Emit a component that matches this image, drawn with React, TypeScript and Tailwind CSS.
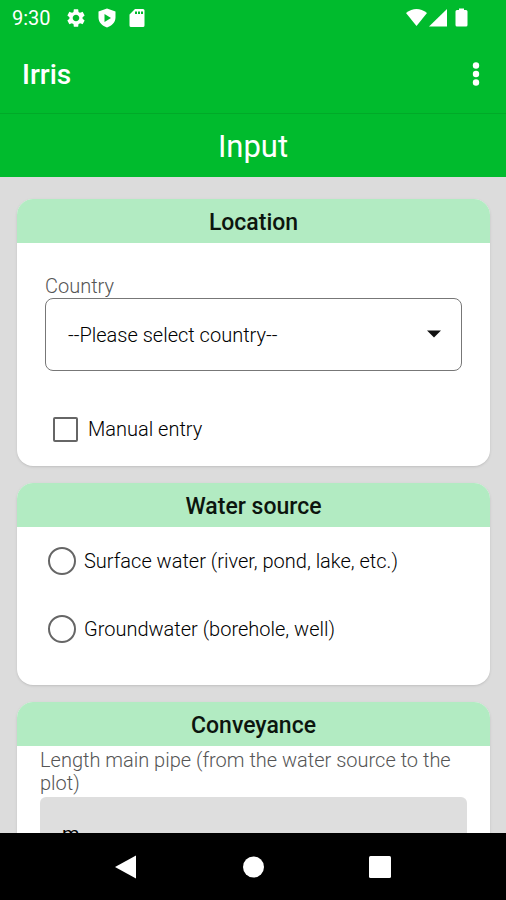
import { useState } from "react";
import type { ReactNode } from "react";
import { MdSettings } from "react-icons/md";

const waterSources = [
  { id: "surface", label: "Surface water (river, pond, lake, etc.)" },
  { id: "ground", label: "Groundwater (borehole, well)" },
];

function StatusBar() {
  return (
    <div className="flex h-9 items-center justify-between pl-3 pr-9">
      <div className="flex items-center">
        <span className="text-xl leading-6">9:30</span>
        <MdSettings className="ml-3.5 w-[22px] h-[22px]" />
        <svg viewBox="0 0 20 20" className="ml-2.5 w-5 h-5" fill="currentColor" aria-hidden="true">
          <path
            fillRule="evenodd"
            d="M10 0.5 L18.5 3.5 V9.5 C18.5 14.5 14.5 18 10 19.5 C5.5 18 1.5 14.5 1.5 9.5 V3.5 Z M7.5 6 V14 L14 10 Z"
          />
        </svg>
        <svg viewBox="0 0 16 20" className="ml-3 w-4 h-5" fill="currentColor" aria-hidden="true">
          <path
            fillRule="evenodd"
            d="M6 1 H14 Q15.5 1 15.5 2.5 V17.5 Q15.5 19 14 19 H2 Q0.5 19 0.5 17.5 V6.5 Z M6 3.5 V6 H8 V3.5 Z M9 3.5 V6 H11 V3.5 Z M12 3.5 V6 H14 V3.5 Z"
          />
        </svg>
      </div>
      <svg viewBox="0 0 64 20" className="w-16 h-5" fill="currentColor" aria-hidden="true">
        <path d="M0 5 Q10.5 -3 21 5 L10.5 18 Z" />
        <path d="M41 1 V18.5 H23 Z" />
        <path d="M53 0.5 H58 V2 H60 Q61.5 2 61.5 3.5 V17 Q61.5 18.5 60 18.5 H51 Q49.5 18.5 49.5 17 V3.5 Q49.5 2 51 2 H53 Z" />
      </svg>
    </div>
  );
}

function Card({ title, children }: { title: string; children: ReactNode }) {
  return (
    <section className="shrink-0 overflow-hidden rounded-2xl bg-white shadow-sm">
      <h2 className="flex h-11 items-center justify-center bg-[#b2ebc2] pt-1 text-[23px] leading-7 font-medium text-[#0c150e]">
        {title}
      </h2>
      {children}
    </section>
  );
}

function NavBar() {
  return (
    <nav className="flex h-[67px] shrink-0 items-center justify-center gap-[103px] bg-black text-white">
      <button type="button" aria-label="Back">
        <svg viewBox="0 0 24 24" className="w-6 h-6" fill="currentColor">
          <path d="M22 0.5 V23.5 L1 12 Z" />
        </svg>
      </button>
      <button type="button" aria-label="Home">
        <svg viewBox="0 0 24 24" className="w-6 h-6" fill="currentColor">
          <circle cx="12.5" cy="12" r="10.5" />
        </svg>
      </button>
      <button type="button" aria-label="Recent apps">
        <svg viewBox="0 0 24 24" className="w-6 h-6" fill="currentColor">
          <rect x="1" y="1" width="22" height="22" rx="1.5" />
        </svg>
      </button>
    </nav>
  );
}

export default function App() {
  const [country, setCountry] = useState("");
  const [manual, setManual] = useState(false);
  const [source, setSource] = useState("");
  const [pipeLength, setPipeLength] = useState("m");

  return (
    <div className="flex h-screen flex-col bg-[#dcdcdc] font-[Roboto,sans-serif] text-black">
      <header className="shrink-0 bg-[#00bb2d] text-white">
        <StatusBar />
        <div className="flex h-[78px] items-center justify-between border-b border-[#00aa28] pl-[22px] pr-4">
          <h1 className="text-[28px] leading-8 font-medium">Irris</h1>
          <button type="button" aria-label="More options">
            <svg viewBox="0 0 28 28" className="w-7 h-7" fill="currentColor">
              <circle cx="14" cy="4.5" r="3.2" />
              <circle cx="14" cy="13" r="3.2" />
              <circle cx="14" cy="21.5" r="3.2" />
            </svg>
          </button>
        </div>
        <p className="flex h-[63px] items-center justify-center pt-0.5 text-[31px] leading-9">Input</p>
      </header>

      <main className="flex min-h-0 flex-1 flex-col gap-[17px] overflow-y-auto pt-[22px] pr-4 pl-[17px] [scrollbar-width:none]">
        <Card title="Location">
          <div className="px-7 pt-8 pb-6">
            <label htmlFor="country" className="block text-xl leading-[23px] font-light text-[#555]">
              Country
            </label>
            <div className="relative">
              <select
                id="country"
                value={country}
                onChange={(e) => setCountry(e.target.value)}
                className="block h-[73px] w-full appearance-none rounded-lg border border-[#777] bg-white px-[22px] text-xl font-light"
              >
                <option value="">--Please select country--</option>
                <option value="ke">Kenya</option>
                <option value="ug">Uganda</option>
              </select>
              <svg
                viewBox="0 0 14 8"
                className="pointer-events-none absolute top-8 right-5 h-2 w-4"
                fill="#111"
                aria-hidden="true"
              >
                <path d="M0 0.5 H14 L7 7.5 Z" />
              </svg>
            </div>
            <label className="mt-[45px] flex items-center gap-2.5 pl-2 text-xl leading-[26px] font-light">
              <input
                type="checkbox"
                checked={manual}
                onChange={(e) => setManual(e.target.checked)}
                className="h-[25px] w-[25px] appearance-none rounded-xs border-2 border-[#666] bg-white checked:bg-[#00bb2d]"
              />
              Manual entry
            </label>
          </div>
        </Card>

        <Card title="Water source">
          <div className="flex flex-col gap-10 px-[31px] pt-5 pb-[42px]">
            {waterSources.map((item) => (
              <label key={item.id} className="flex items-center gap-2 text-xl leading-7 font-light">
                <input
                  type="radio"
                  name="source"
                  value={item.id}
                  checked={source === item.id}
                  onChange={() => setSource(item.id)}
                  className="h-7 w-7 shrink-0 appearance-none rounded-full border-2 border-[#666] bg-white checked:border-8 checked:border-[#00bb2d]"
                />
                {item.label}
              </label>
            ))}
          </div>
        </Card>

        <Card title="Conveyance">
          <div className="px-[23px] pt-[3px] pb-6">
            <label htmlFor="pipe" className="block pb-0.5 text-xl leading-[23px] font-light text-[#555]">
              Length main pipe (from the water source to the plot)
            </label>
            <input
              id="pipe"
              type="text"
              value={pipeLength}
              onChange={(e) => setPipeLength(e.target.value)}
              className="block h-[73px] w-full rounded-md bg-[#dedede] px-[22px] text-xl"
            />
          </div>
        </Card>
      </main>

      <NavBar />
    </div>
  );
}
